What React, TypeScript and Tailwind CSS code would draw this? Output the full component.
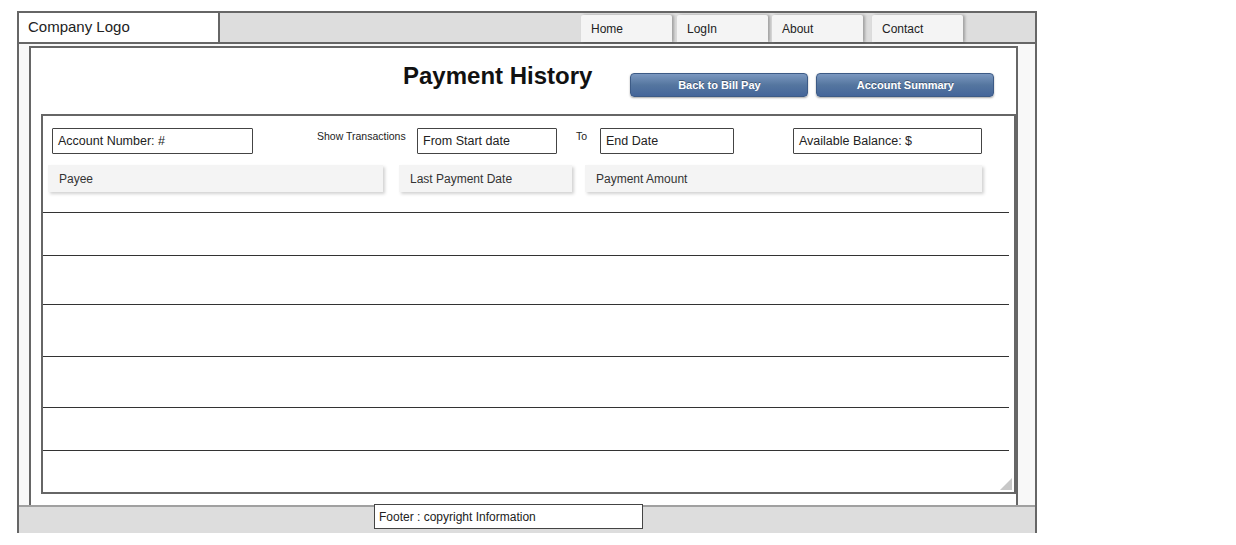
import React from "react";

const hand = { fontFamily: '"Liberation Sans", Arial, sans-serif' };

function Tab({ label, className = "" }: { label: string; className?: string }) {
  return (
    <div
      className={`h-[27px] w-[91px] bg-[#f4f4f4] rounded-t-[2px] shadow-[2px_0_3px_rgba(0,0,0,0.28)] pl-[10px] flex items-center text-[12px] text-[#222] ${className}`}
    >
      {label}
    </div>
  );
}

function Btn({ label, className = "" }: { label: string; className?: string }) {
  return (
    <div
      className={`h-[24px] w-[178px] rounded-[4px] border border-[#3d5b86] bg-gradient-to-b from-[#7b98c0] via-[#55769f] to-[#44659a] shadow-[0_1px_2px_rgba(0,0,0,0.35)] flex items-center justify-center text-white font-bold text-[11px] [text-shadow:0_-1px_0_rgba(0,0,0,0.35)] ${className}`}
    >
      {label}
    </div>
  );
}

function Field({ label, className = "" }: { label: string; className?: string }) {
  return (
    <div
      className={`h-[26px] border border-[#444] rounded-[1px] bg-white flex items-center pl-[5px] text-[12.5px] text-[#222] ${className}`}
      style={hand}
    >
      {label}
    </div>
  );
}

function Head({ label, className = "" }: { label: string; className?: string }) {
  return (
    <div
      className={`h-[27px] bg-[#f4f4f4] shadow-[2px_2px_3px_rgba(0,0,0,0.18)] flex items-center pl-[11px] text-[12px] text-[#333] ${className}`}
    >
      {label}
    </div>
  );
}

export default function App() {
  const rows = [21, 43, 49, 52, 51, 43];
  return (
    <div
      className="w-[1236px] h-[545px] bg-white pt-[11px] pl-[17px]"
      style={{ fontFamily: '"Liberation Sans", Arial, sans-serif' }}
    >
      <div className="w-[1020px] h-[522px] border-x-2 border-t-2 border-[#666] flex flex-col">
        {/* Header */}
        <div className="h-[31px] border-b-2 border-[#666] flex bg-[#dddddd]">
          <div className="w-[201px] h-full bg-white border-r-2 border-[#666] flex items-center pl-[9px] text-[15px] text-[#222]">
            Company Logo
          </div>
          <div className="flex items-end gap-[5px] ml-[361px] h-full">
            <Tab label="Home" />
            <Tab label="LogIn" />
            <Tab label="About" className="-ml-[1px]" />
            <Tab label="Contact" className="ml-[4px]" />
          </div>
        </div>

        {/* Body */}
        <div className="h-[461px] flex bg-[#f8f8f8]">
          <div className="w-[10px]" />
          <div className="w-[989px] mt-[2px] h-[459px] bg-white border-x-2 border-t-2 border-[#666] flex flex-col">
            <div className="h-[66px] flex items-start">
              <div className="ml-[372px] mt-[14px] text-[24px] font-bold text-[#111] leading-[28px]">
                Payment History
              </div>
              <Btn label="Back to Bill Pay" className="ml-[38px] mt-[25px]" />
              <Btn label="Account Summary" className="ml-[8px] mt-[25px]" />
            </div>
            <div className="ml-[10px] w-[975px] h-[380px] border-2 border-[#666] relative flex flex-col">
              <div className="flex items-start mt-[12px]">
                <Field label="Account Number: #" className="ml-[9px] w-[201px]" />
                <div className="ml-[64px] w-[100px] mt-[1px] text-[10.5px] text-[#222]">Show Transactions</div>
                <Field label="From Start date" className="w-[140px]" />
                <div className="ml-[19px] w-[24px] mt-[1px] text-[10.5px] text-[#222]">To</div>
                <Field label="End Date" className="w-[134px]" />
                <Field label="Available Balance: $" className="ml-[59px] w-[189px]" />
              </div>
              <div className="flex mt-[11px]">
                <Head label="Payee" className="ml-[5px] w-[335px]" />
                <Head label="Last Payment Date" className="ml-[16px] w-[173px]" />
                <Head label="Payment Amount" className="ml-[13px] w-[397px]" />
              </div>
              <div className="flex flex-col">
                {rows.map((h, i) => (
                  <div
                    key={i}
                    className="w-[966px] border-b border-[#333]"
                    style={{ height: h }}
                  />
                ))}
              </div>
              <div className="absolute right-[2px] bottom-[2px] w-0 h-0 border-l-[12px] border-l-transparent border-b-[12px] border-b-[#c8c8c8]" />
            </div>
          </div>
          <div className="w-[17px]" />
        </div>

        {/* Footer */}
        <div className="h-[28px] border-t-2 border-[#a0a0a0] bg-[#dddddd]">
          <div
            className="ml-[355px] -mt-[3px] w-[269px] h-[25px] bg-white border border-[#444] flex items-center pl-[4px] text-[12px] text-[#222]"
            style={hand}
          >
            Footer : copyright Information
          </div>
        </div>
      </div>
    </div>
  );
}
